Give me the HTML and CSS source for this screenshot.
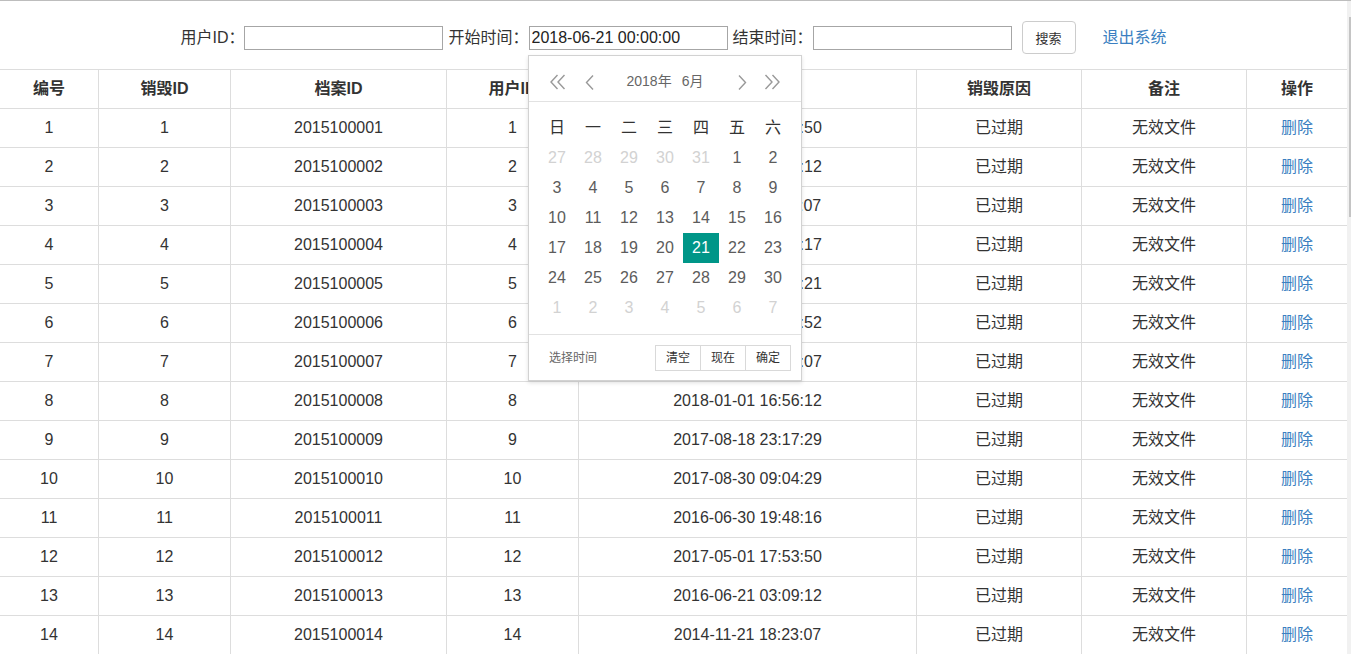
FILE: index.html
```html
<!DOCTYPE html>
<html lang="zh-CN">
<head>
<meta charset="utf-8">
<title>销毁记录</title>
<link rel="stylesheet" href="styles.css">
</head>
<body>
<div class="page">
  <div class="topbar">
    <form class="search">
      <label class="lbl">用户ID：</label><input class="txt" type="text">
      <label class="lbl gap">开始时间：</label><input class="txt" type="text" value="2018-06-21 00:00:00">
      <label class="lbl gap">结束时间：</label><input class="txt" type="text">
      <button class="btn" type="button">搜索</button>
      <a class="logout" href="#">退出系统</a>
    </form>
  </div>

  <table class="grid">
    <colgroup>
      <col class="c1"><col class="c2"><col class="c3"><col class="c4"><col class="c5"><col class="c6"><col class="c7"><col class="c8">
    </colgroup>
    <thead>
      <tr><th>编号</th><th>销毁ID</th><th>档案ID</th><th>用户ID</th><th>销毁时间</th><th>销毁原因</th><th>备注</th><th>操作</th></tr>
    </thead>
    <tbody>
      <tr><td>1</td><td>1</td><td>2015100001</td><td>1</td><td>2017-05-01 17:53:50</td><td>已过期</td><td>无效文件</td><td><a href="#">删除</a></td></tr>
      <tr><td>2</td><td>2</td><td>2015100002</td><td>2</td><td>2016-06-21 03:09:12</td><td>已过期</td><td>无效文件</td><td><a href="#">删除</a></td></tr>
      <tr><td>3</td><td>3</td><td>2015100003</td><td>3</td><td>2014-11-21 18:23:07</td><td>已过期</td><td>无效文件</td><td><a href="#">删除</a></td></tr>
      <tr><td>4</td><td>4</td><td>2015100004</td><td>4</td><td>2017-08-18 23:17:17</td><td>已过期</td><td>无效文件</td><td><a href="#">删除</a></td></tr>
      <tr><td>5</td><td>5</td><td>2015100005</td><td>5</td><td>2018-01-01 16:56:21</td><td>已过期</td><td>无效文件</td><td><a href="#">删除</a></td></tr>
      <tr><td>6</td><td>6</td><td>2015100006</td><td>6</td><td>2016-06-30 19:48:52</td><td>已过期</td><td>无效文件</td><td><a href="#">删除</a></td></tr>
      <tr><td>7</td><td>7</td><td>2015100007</td><td>7</td><td>2017-08-30 09:04:07</td><td>已过期</td><td>无效文件</td><td><a href="#">删除</a></td></tr>
      <tr><td>8</td><td>8</td><td>2015100008</td><td>8</td><td>2018-01-01 16:56:12</td><td>已过期</td><td>无效文件</td><td><a href="#">删除</a></td></tr>
      <tr><td>9</td><td>9</td><td>2015100009</td><td>9</td><td>2017-08-18 23:17:29</td><td>已过期</td><td>无效文件</td><td><a href="#">删除</a></td></tr>
      <tr><td>10</td><td>10</td><td>2015100010</td><td>10</td><td>2017-08-30 09:04:29</td><td>已过期</td><td>无效文件</td><td><a href="#">删除</a></td></tr>
      <tr><td>11</td><td>11</td><td>2015100011</td><td>11</td><td>2016-06-30 19:48:16</td><td>已过期</td><td>无效文件</td><td><a href="#">删除</a></td></tr>
      <tr><td>12</td><td>12</td><td>2015100012</td><td>12</td><td>2017-05-01 17:53:50</td><td>已过期</td><td>无效文件</td><td><a href="#">删除</a></td></tr>
      <tr><td>13</td><td>13</td><td>2015100013</td><td>13</td><td>2016-06-21 03:09:12</td><td>已过期</td><td>无效文件</td><td><a href="#">删除</a></td></tr>
      <tr><td>14</td><td>14</td><td>2015100014</td><td>14</td><td>2014-11-21 18:23:07</td><td>已过期</td><td>无效文件</td><td><a href="#">删除</a></td></tr>
    </tbody>
  </table>

  <div class="laydate">
    <div class="ld-head">
      <span class="ld-nav ld-pry" title="上一年">
        <svg width="18" height="16" viewBox="0 0 18 16"><path d="M8.5 1 L2 8 L8.5 15 M15.5 1 L9 8 L15.5 15" fill="none" stroke="#999" stroke-width="1.4"/></svg>
      </span>
      <span class="ld-nav ld-prm" title="上一月">
        <svg width="9" height="15" viewBox="0 0 9 15"><path d="M8 0.5 L1.5 7.5 L8 14.5" fill="none" stroke="#999" stroke-width="1.4"/></svg>
      </span>
      <div class="ld-ym"><span>2018年</span><span>6月</span></div>
      <span class="ld-nav ld-nxm" title="下一月">
        <svg width="9" height="15" viewBox="0 0 9 15"><path d="M1 0.5 L7.5 7.5 L1 14.5" fill="none" stroke="#999" stroke-width="1.4"/></svg>
      </span>
      <span class="ld-nav ld-nxy" title="下一年">
        <svg width="18" height="16" viewBox="0 0 18 16"><path d="M2.5 1 L9 8 L2.5 15 M9.5 1 L16 8 L9.5 15" fill="none" stroke="#999" stroke-width="1.4"/></svg>
      </span>
    </div>
    <div class="ld-body">
      <table class="ld-table">
        <thead>
          <tr><th>日</th><th>一</th><th>二</th><th>三</th><th>四</th><th>五</th><th>六</th></tr>
        </thead>
        <tbody>
          <tr><td class="off">27</td><td class="off">28</td><td class="off">29</td><td class="off">30</td><td class="off">31</td><td>1</td><td>2</td></tr>
          <tr><td>3</td><td>4</td><td>5</td><td>6</td><td>7</td><td>8</td><td>9</td></tr>
          <tr><td>10</td><td>11</td><td>12</td><td>13</td><td>14</td><td>15</td><td>16</td></tr>
          <tr><td>17</td><td>18</td><td>19</td><td>20</td><td class="on">21</td><td>22</td><td>23</td></tr>
          <tr><td>24</td><td>25</td><td>26</td><td>27</td><td>28</td><td>29</td><td>30</td></tr>
          <tr><td class="off">1</td><td class="off">2</td><td class="off">3</td><td class="off">4</td><td class="off">5</td><td class="off">6</td><td class="off">7</td></tr>
        </tbody>
      </table>
    </div>
    <div class="ld-foot">
      <span class="ld-time">选择时间</span>
      <div class="ld-btns">
        <span class="ld-btn">清空</span><span class="ld-btn">现在</span><span class="ld-btn">确定</span>
      </div>
    </div>
  </div>

  <div class="scrollbar"><div class="thumb"></div></div>
</div>
</body>
</html>
```

FILE: styles.css
```css
html, body {
  margin: 0;
  padding: 0;
  overflow: hidden;
  height: 654px;
  background: #fff;
}

body {
  font-family: "Liberation Sans", "Noto Sans CJK SC", sans-serif;
  font-size: 16px;
  color: #333;
}

.page {
  position: relative;
  width: 1351px;
  height: 654px;
  overflow: hidden;
  border-top: 1px solid #bdbdbd;
  box-sizing: border-box;
}

/* ---------- search bar ---------- */
.topbar {
  height: 68px;
  padding-top: 20px;
  box-sizing: border-box;
}

.search {
  width: 1347px;
  display: flex;
  justify-content: center;
  align-items: center;
  height: 33px;
  margin: 0;
}

.lbl {
  line-height: 24px;
  white-space: nowrap;
  color: #333;
}

.lbl.gap {
  margin-left: 5px;
}

.txt {
  width: 199px;
  height: 24px;
  box-sizing: border-box;
  border: 1px solid #a6a6a6;
  padding: 0 2px;
  margin: 0;
  font-family: "Liberation Sans", "Noto Sans CJK SC", sans-serif;
  font-size: 16px;
  color: #222;
  outline: none;
}

.btn {
  margin-left: 10px;
  width: 54px;
  height: 33px;
  border: 1px solid #ccc;
  border-radius: 4px;
  background: #fff;
  font-family: "Liberation Sans", "Noto Sans CJK SC", sans-serif;
  font-size: 13px;
  color: #333;
  padding: 0;
}

.logout {
  margin-left: 27px;
  color: #3a7fc1;
  text-decoration: none;
  line-height: 24px;
}

/* ---------- table ---------- */
.grid {
  border-collapse: collapse;
  table-layout: fixed;
  width: 1348px;
  margin-left: -1px;
}

.grid col.c1 { width: 99px; }
.grid col.c2 { width: 132px; }
.grid col.c3 { width: 216px; }
.grid col.c4 { width: 132px; }
.grid col.c5 { width: 338px; }
.grid col.c6 { width: 165px; }
.grid col.c7 { width: 165px; }
.grid col.c8 { width: 101px; }

.grid th,
.grid td {
  border: 1px solid #ddd;
  height: 38px;
  padding: 0;
  text-align: center;
  vertical-align: middle;
  line-height: 20px;
  white-space: nowrap;
  overflow: hidden;
}

.grid th {
  font-weight: bold;
  color: #333;
}

.grid td {
  color: #333;
}

.grid a {
  color: #3a7fc1;
  text-decoration: none;
}

/* ---------- laydate popup ---------- */
.laydate {
  position: absolute;
  left: 528px;
  top: 54px;
  width: 274px;
  box-sizing: border-box;
  border: 1px solid #d2d2d2;
  background: #fff;
  box-shadow: 0 2px 4px rgba(0, 0, 0, 0.12);
  color: #666;
}

.ld-head {
  position: relative;
  height: 46px;
  padding-top: 5px;
  box-sizing: border-box;
  border-bottom: 1px solid #e2e2e2;
  display: flex;
  align-items: center;
  justify-content: center;
}

.ld-nav {
  position: absolute;
  top: 18px;
  display: flex;
  line-height: 0;
}

.ld-pry { left: 20px; }
.ld-prm { left: 56px; top: 19px; }
.ld-nxm { left: 209px; top: 19px; }
.ld-nxy { left: 234px; }

.ld-ym {
  font-size: 14px;
  color: #666;
  line-height: 20px;
  display: flex;
}

.ld-ym span {
  padding: 0 5px;
}

.ld-body {
  padding: 11px 10px;
}

.ld-table {
  border-collapse: collapse;
  border-spacing: 0;
}

.ld-table th,
.ld-table td {
  width: 36px;
  height: 30px;
  padding: 0;
  text-align: center;
  font-size: 16px;
  font-weight: normal;
  line-height: 30px;
  color: #5c5c5c;
}

.ld-table th {
  color: #333;
}

.ld-table td.off {
  color: #d2d2d2;
}

.ld-table td.on {
  background: #009688;
  color: #fff;
}

.ld-foot {
  border-top: 1px solid #e2e2e2;
  height: 45px;
  padding: 0 10px 0 20px;
  display: flex;
  align-items: center;
  justify-content: space-between;
}

.ld-time {
  font-size: 12px;
  color: #666;
  line-height: 20px;
}

.ld-btns {
  display: flex;
}

.ld-btn {
  display: block;
  width: 46px;
  height: 26px;
  box-sizing: border-box;
  border: 1px solid #d9d9d9;
  margin-left: -1px;
  font-size: 12px;
  line-height: 24px;
  text-align: center;
  color: #333;
  background: #fff;
}

/* ---------- fake scrollbar ---------- */
.scrollbar {
  position: absolute;
  right: 0;
  top: -1px;
  width: 4px;
  height: 654px;
  background: #f1f1f1;
}

.thumb {
  position: absolute;
  right: 0;
  top: 17px;
  width: 2px;
  height: 200px;
  background: #c4c4c4;
}
```
